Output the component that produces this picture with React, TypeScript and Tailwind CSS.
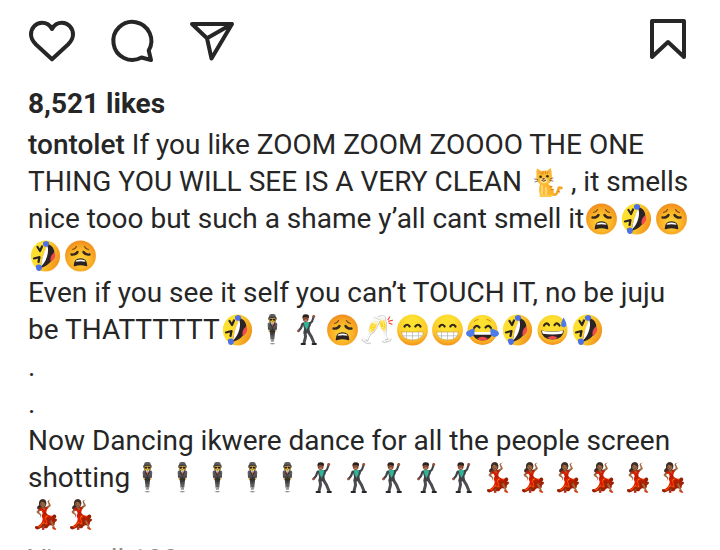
import React from "react";

interface IconButtonProps {
  label: string;
  path: string;
}

const IconButton = ({ label, path }: IconButtonProps) => (
  <button type="button" aria-label={label} className="size-12 cursor-pointer">
    <svg
      viewBox="0 0 48 48"
      fill="none"
      stroke="currentColor"
      strokeWidth="4"
      strokeLinejoin="round"
      strokeLinecap="round"
      className="size-12"
    >
      <path d={path} />
    </svg>
  </button>
);

// shared fills for the emoji drawings
const Fills = () => (
  <svg className="absolute size-0" aria-hidden="true">
    <defs>
      <radialGradient id="yellow" cx="0.5" cy="0.3" r="0.7">
        <stop offset="0.3" stopColor="#fde030" />
        <stop offset="0.7" stopColor="#fcc82a" />
        <stop offset="1" stopColor="#f4921c" />
      </radialGradient>
      <radialGradient id="orange" cx="0.5" cy="0.6" r="0.6">
        <stop offset="0" stopColor="#fdd835" />
        <stop offset="0.5" stopColor="#fbb829" />
        <stop offset="1" stopColor="#f18c1c" />
      </radialGradient>
      <linearGradient id="side" x1="0" y1="0.3" x2="1" y2="0.7">
        <stop offset="0.3" stopColor="#fde030" />
        <stop offset="1" stopColor="#f28f1c" />
      </linearGradient>
    </defs>
  </svg>
);

const Drawing = ({ label, children }: { label: string; children: React.ReactNode }) => (
  <svg
    role="img"
    aria-label={label}
    viewBox="0 0 35 32"
    fill="none"
    strokeLinecap="round"
    strokeLinejoin="round"
    className="inline-block w-[35px] h-8 align-[-7px]"
  >
    {children}
  </svg>
);

const Weary = () => (
  <Drawing label="😩">
    <circle cx="17.5" cy="16" r="15.4" fill="url(#orange)" />
    <path d="M9.5 9.500q3-.6 4-3M25.500 9.500q-3-.6-4-3" stroke="#7a4a14" strokeWidth="1.200" />
    <path d="M8.500 14.500q4 .6 6-2.500M26.500 14.500q-4 .6-6-2.500" stroke="#35291f" strokeWidth="2.400" />
    <path d="M11.500 25.500q.2-6.500 6-6.500t6 6.500q-3-1-6-1t-6 1z" fill="#2b2222" stroke="#2b2222" strokeWidth="1.600" />
    <path d="M13 20.400q4.500-2 9 0l.4 1.400q-5-1.200-9.800 0z" fill="#fff" />
  </Drawing>
);

const Rofl = () => (
  <Drawing label="🤣">
    <ellipse cx="17.5" cy="16" rx="14.600" ry="15.400" fill="url(#side)" />
    <path d="M20 4C31 8 27 24 12.500 28 13.500 20 16.500 12 20 4z" fill="#2c2324" />
    <path d="M19 5.500c2.500 4 .5 15-6 21 .5-7 3-14 6-21z" fill="#fff" />
    <path d="M26 12.500c2.500 2 1 7-3 9.500-1.500-3 0-7 3-9.500z" fill="#ef4b4e" />
    <path d="M9.500 7l2.500 4 2-4.500" stroke="#2c2324" strokeWidth="2.200" />
    <path d="M6 18.500l5.500-1.500-1 5" stroke="#2c2324" strokeWidth="2.200" />
    <path d="M15 2.500q3-3 6 0 .5 4-3 4.200t-3-4.200zM8 25.500q4-2.500 5.800 1 .8 3.500-2.300 4.500-4 .2-3.500-5.500z" fill="#4d6fe8" />
  </Drawing>
);

const Beaming = () => (
  <Drawing label="😁">
    <circle cx="17.5" cy="16" r="15.400" fill="url(#yellow)" />
    <path d="M9.500 12.500q2.500-3.500 5.200 0M20.300 12.500q2.700-3.500 5.200 0" stroke="#35291f" strokeWidth="2.200" />
    <path d="M6.500 18h22q-1 8-11 8t-11-8z" fill="#fff" stroke="#c79a45" strokeWidth="0.600" />
    <path d="M7.500 21.800h20M11.500 18v6.500M17.500 18v8M23.500 18v6.500" stroke="#a9b4b9" strokeWidth="0.700" />
  </Drawing>
);

const Joy = () => (
  <Drawing label="😂">
    <circle cx="17.5" cy="16" r="15" fill="url(#yellow)" />
    <path d="M9 7.500q2-2 4-2M26 7.500q-2-2-4-2" stroke="#d08a22" strokeWidth="1" />
    <path d="M9 14q2.500-4 5.500-.5M20.500 13.500q3-3.500 5.500.5" stroke="#35291f" strokeWidth="2.200" />
    <path d="M7.500 18h20q-1 8.500-10 8.500t-10-8.500z" fill="#2c2324" />
    <path d="M8.500 18h18l-1 2.800h-16z" fill="#fff" />
    <path d="M12 25q5.500-4.500 11 0-5.500 3-11 0z" fill="#ef4b4e" />
    <path d="M9.500 14.500q1 8-4 8.500Q1 22.500 1 19q1-3 8.500-4.500zM25.500 14.500q-1 8 4 8.500 4.500-.5 4.500-4-1-3-8.500-4.500z" fill="#4d7bea" />
  </Drawing>
);

const Sweat = () => (
  <Drawing label="😅">
    <circle cx="17.5" cy="16" r="15" fill="url(#yellow)" />
    <path d="M9 11.500q2.500-4 5-.3M19.500 11.200q2.500-3.700 5 .3" stroke="#35291f" strokeWidth="2.200" />
    <path d="M6 16.500q11.500 2 23 0-1 9-11.500 9T6 16.500z" fill="#2c2324" />
    <path d="M6.800 16.800q10.700 2 21.400 0l-1 3q-9.700 1.600-19.400 0z" fill="#fff" />
    <path d="M12 24q5.500-4 11 0-5.500 2.500-11 0z" fill="#ef4b4e" />
    <path d="M28.500 3.500q3.800 6 2.500 8.500-2 2.200-4.500.3-1.500-2.300 2-8.800z" fill="#4d7bea" />
  </Drawing>
);

const Cat = () => (
  <Drawing label="🐈">
    <path d="M22.500 27.500q4 2.500 5.500-.5t1.500-4.500 3-.5" stroke="#f6a623" strokeWidth="2.600" />
    <path d="M11 18q6-3 9.500 1 5 4 4.500 10.500l-13.500 1Q9 24 11 18z" fill="#fbb52c" />
    <path d="M13 20v8M17 22v6" stroke="#fdd46b" strokeWidth="2.400" />
    <path d="M21 21l2-.7M22 24l2.500-.5M29 25l1.500 1" stroke="#d97a16" strokeWidth="1.100" />
    <path d="M11.500 29.800h4M17 29.800h5" stroke="#fdc94d" strokeWidth="2.200" />
    <path d="M8 2.500l4.500 2.500q3-.8 5.500-.3L21.500 2q1.500 3 1.300 6.500 1.200 6-2.500 8.700-5 3.300-10 .3Q6.500 14 7.500 9 6.800 5 8 2.500z" fill="#fdbb2f" />
    <path d="M8.800 4.500l2 1.500-1.600 2zM21 4l.6 3.500-2-1.500z" fill="#f29a8c" />
    <path d="M14 5.500v2.500M16.500 5.500v2M11.800 6.500l.6 1.500M18.800 6l-.4 1.500" stroke="#db7c18" strokeWidth="0.900" />
    <ellipse cx="14.900" cy="14.500" rx="3.500" ry="2.700" fill="#fee39a" />
    <circle cx="11.600" cy="10.800" r="1.300" fill="#30251c" />
    <circle cx="18.400" cy="10.300" r="1.300" fill="#30251c" />
    <path d="M13.700 12.600h2l-1 1z" fill="#5b2b1c" stroke="#5b2b1c" strokeWidth="0.600" />
    <path d="M12.800 14.500q2 1.800 4-.2" stroke="#5b2b1c" strokeWidth="1" />
    <path d="M8.500 13.500l-3-.5M8.800 15l-2.800 1M21 13l3-1M21 14.500l3 .5" stroke="#4b4038" strokeWidth="0.700" />
  </Drawing>
);

const Dancer = () => (
  <Drawing label="🕺🏾">
    <path d="M12.500 10l-1.500 4-2.500 3M20 9.500l2-2 1.800-5" stroke="#414347" strokeWidth="2.200" />
    <circle cx="8.400" cy="17" r="1.200" fill="#a3513a" />
    <circle cx="23.700" cy="2.300" r="1.400" fill="#a3513a" />
    <path d="M15 18l.5 5-1.500 6M18.500 18l3 5 2.500 6" stroke="#4b4d51" strokeWidth="3" />
    <path d="M12.500 8.500l7.500-.5 1 3-1.500 3 .5 5-6.500.5.5-5z" fill="#414347" />
    <path d="M13.800 8h5.200l-.5 4-2 4-2-4z" fill="#2fb595" />
    <path d="M11.500 30h3.500M22.500 30h3.500" stroke="#25262a" strokeWidth="1.800" />
    <ellipse cx="15.700" cy="4.500" rx="2.900" ry="3.400" fill="#8b4a30" />
    <path d="M12.600 4.500q-1-4 3-4.200 4.500.2 3.200 3.700-2.500-1.500-4.700-1z" fill="#2b211e" />
    <path d="M14.800 6.200h2" stroke="#e9d8cc" strokeWidth="0.600" />
  </Drawing>
);

const App = () => {
  return (
    <main className="h-screen overflow-hidden bg-white px-7 pt-[17px] text-[28px] leading-[37px] text-[#262626] font-['Roboto',sans-serif]">
      <Fills />
      <div className="flex items-center justify-between">
        <div className="flex gap-8">
          <IconButton
            label="Like"
            path="M24 42.3L8 27.500C4.500 24 3 21 3 17.500 3 11 8 5.800 14 5.800c4.500 0 8 2.400 10 6.200 2-3.800 5.500-6.200 10-6.200 6 0 11 5.200 11 11.700 0 3.500-1.500 6.500-5 10z"
          />
          <IconButton label="Comment" path="M40.700 33.500A19 19 0 1 0 33.500 40.500L43 43z" />
          <IconButton label="Share" path="M4 7H44L23.500 41.500 19 21.300zM19 21.300L44 7" />
        </div>
        <IconButton label="Save" path="M8 4H40V40L24 25 8 40z" />
      </div>

      <p className="mt-5 mb-1 font-bold">8,521 likes</p>

      <p>
        <a href="#tontolet" className="font-medium">tontolet</a> If you like ZOOM ZOOM ZOOOO THE ONE
        THING YOU WILL SEE IS A VERY CLEAN <Cat /> , it smells nice tooo but such a shame y’all cant
        smell it<Weary /><Rofl /><Weary /><Rofl /><Weary />
      </p>
      <p>
        Even if you see it self you can’t TOUCH IT, no be juju be THATTTTTT<Rofl />
        🕴<Dancer /><Weary />🥂<Beaming /><Beaming /><Joy /><Rofl /><Sweat /><Rofl />
      </p>
      <p>.</p>
      <p>.</p>
      <p>
        Now Dancing ikwere dance for all the people screen shotting🕴🕴🕴🕴🕴
        <Dancer /><Dancer /><Dancer /><Dancer /><Dancer />
        💃🏾💃🏾💃🏾💃🏾💃🏾💃🏾💃🏾💃🏾
      </p>

      <a href="#comments" className="mt-2 block text-[#8e8e8e]">View all 188 comments</a>
    </main>
  );
};

export default App;
